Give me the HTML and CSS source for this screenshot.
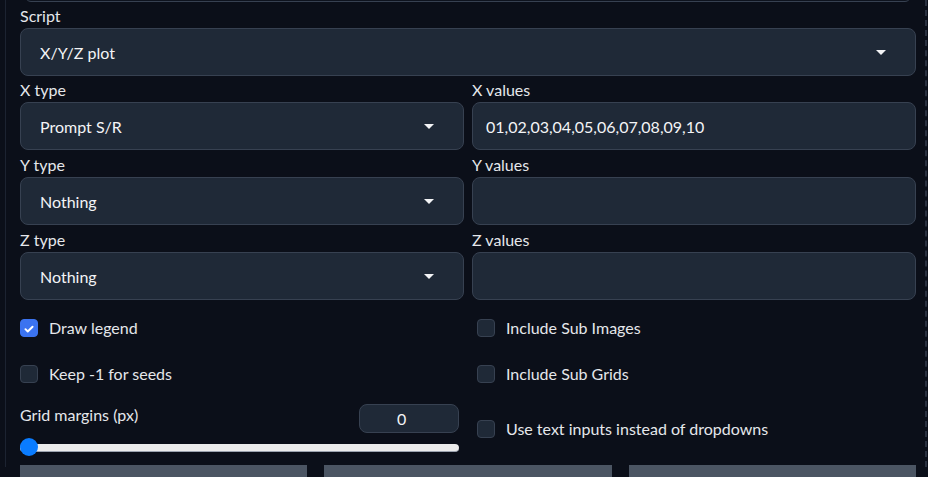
FILE: index.html
```html
<!DOCTYPE html>
<html>
<head>
<meta charset="utf-8">
<link rel="stylesheet" href="styles.css">
</head>
<body>
<div class="panel">
  <div class="prev-box"></div>
  <div class="field">
    <div class="label">Script</div>
    <div class="select"><span>X/Y/Z plot</span><span class="caret"></span></div>
  </div>
  <div class="pair">
    <div class="field">
      <div class="label">X type</div>
      <div class="select"><span>Prompt S/R</span><span class="caret"></span></div>
    </div>
    <div class="field">
      <div class="label">X values</div>
      <div class="textbox">01,02,03,04,05,06,07,08,09,10</div>
    </div>
  </div>
  <div class="pair">
    <div class="field">
      <div class="label">Y type</div>
      <div class="select"><span>Nothing</span><span class="caret"></span></div>
    </div>
    <div class="field">
      <div class="label">Y values</div>
      <div class="textbox"></div>
    </div>
  </div>
  <div class="pair">
    <div class="field">
      <div class="label">Z type</div>
      <div class="select"><span>Nothing</span><span class="caret"></span></div>
    </div>
    <div class="field">
      <div class="label">Z values</div>
      <div class="textbox"></div>
    </div>
  </div>
  <div class="options">
    <div class="left">
      <label class="check row1"><span class="box checked"><svg viewBox="0 0 18 18" width="18" height="18"><path d="M5 9.2l2.6 2.6L13 6.4" fill="none" stroke="#fff" stroke-width="2.2" stroke-linecap="round" stroke-linejoin="round"/></svg></span><span>Draw legend</span></label>
      <label class="check row2"><span class="box"></span><span>Keep -1 for seeds</span></label>
      <div class="slider-block">
        <div class="slider-head">
          <span class="label">Grid margins (px)</span>
          <div class="number">0</div>
        </div>
        <div class="track"><span class="thumb"></span></div>
      </div>
    </div>
    <div class="right">
      <label class="check row1"><span class="box"></span><span>Include Sub Images</span></label>
      <label class="check row2"><span class="box"></span><span>Include Sub Grids</span></label>
      <label class="check row3"><span class="box"></span><span>Use text inputs instead of dropdowns</span></label>
    </div>
  </div>
  <div class="buttons">
    <div class="btn"></div>
    <div class="btn"></div>
    <div class="btn"></div>
  </div>
</div>
</body>
</html>
```
FILE: styles.css
```css
html, body {
  margin: 0;
  padding: 0;
  background: #0b0f19;
  height: 477px;
  overflow: hidden;
}
body {
  font-family: Lato, "Noto Sans", sans-serif;
  font-size: 16px;
  color: #e5e7eb;
}
.panel {
  margin-left: 5px;
  width: 922px;
  box-sizing: border-box;
  height: 477px;
  border-left: 1px solid #1c2331;
  border-right: 2px dashed #2a3140;
  padding: 0 9px 0 14px;
}
.prev-box {
  height: 10px;
  margin: -10px 5px 0 5px;
  border: 1px solid #374151;
  border-radius: 8px;
  background: #0e131e;
}
.field {
  display: flex;
  flex-direction: column;
}
.label {
  line-height: 20px;
  height: 20px;
  margin-bottom: 2px;
  color: #e5e7eb;
}
.field > .label {
  margin-top: 4px;
}
.pair {
  display: grid;
  grid-template-columns: 444px 1fr;
  column-gap: 8px;
  margin-bottom: 1px;
}
.select, .textbox {
  height: 48px;
  box-sizing: border-box;
  border: 1px solid #374151;
  border-radius: 8px;
  background: #1f2937;
  display: flex;
  align-items: center;
  color: #f3f4f6;
}
.select {
  padding: 0 29px 0 19px;
  justify-content: space-between;
}
.textbox {
  padding: 0 13px;
}
.caret {
  width: 0;
  height: 0;
  border-left: 5px solid transparent;
  border-right: 5px solid transparent;
  border-top: 5px solid #f3f4f6;
}
.options {
  display: grid;
  grid-template-columns: 439px 1fr;
  column-gap: 18px;
  margin-top: 19px;
}
.left, .right {
  display: flex;
  flex-direction: column;
}
.check {
  display: flex;
  align-items: center;
  gap: 11px;
  height: 18px;
  line-height: 18px;
  color: #e5e7eb;
}
.row2 { margin-top: 28px; }
.row3 { margin-top: 37px; }
.box {
  width: 18px;
  height: 18px;
  box-sizing: border-box;
  border: 1px solid #374151;
  border-radius: 4px;
  background: #1f2937;
  display: flex;
  flex: none;
}
.box.checked {
  background: #3b73f0;
  border-color: #3b73f0;
}
.slider-block {
  margin-top: 21px;
}
.slider-head {
  display: flex;
  justify-content: space-between;
  align-items: flex-start;
  height: 29px;
}
.slider-head .label { margin: 1px 0 0 0; }
.number {
  width: 100px;
  height: 29px;
  box-sizing: border-box;
  border: 1px solid #374151;
  border-radius: 8px;
  background: #1f2937;
  display: flex;
  align-items: center;
  padding-left: 37px;
  color: #f3f4f6;
}
.track {
  position: relative;
  margin-top: 11px;
  height: 7px;
  border-radius: 4px;
  background: #ececec;
  border-bottom: 1px solid #9ca3af;
}
.thumb {
  position: absolute;
  left: 0;
  top: -6px;
  width: 18px;
  height: 18px;
  border-radius: 50%;
  background: #0a7cff;
}
.buttons {
  display: grid;
  grid-template-columns: repeat(3, 1fr);
  column-gap: 17px;
  margin-top: 13px;
}
.btn {
  height: 30px;
  background: #4b5563;
}
```
